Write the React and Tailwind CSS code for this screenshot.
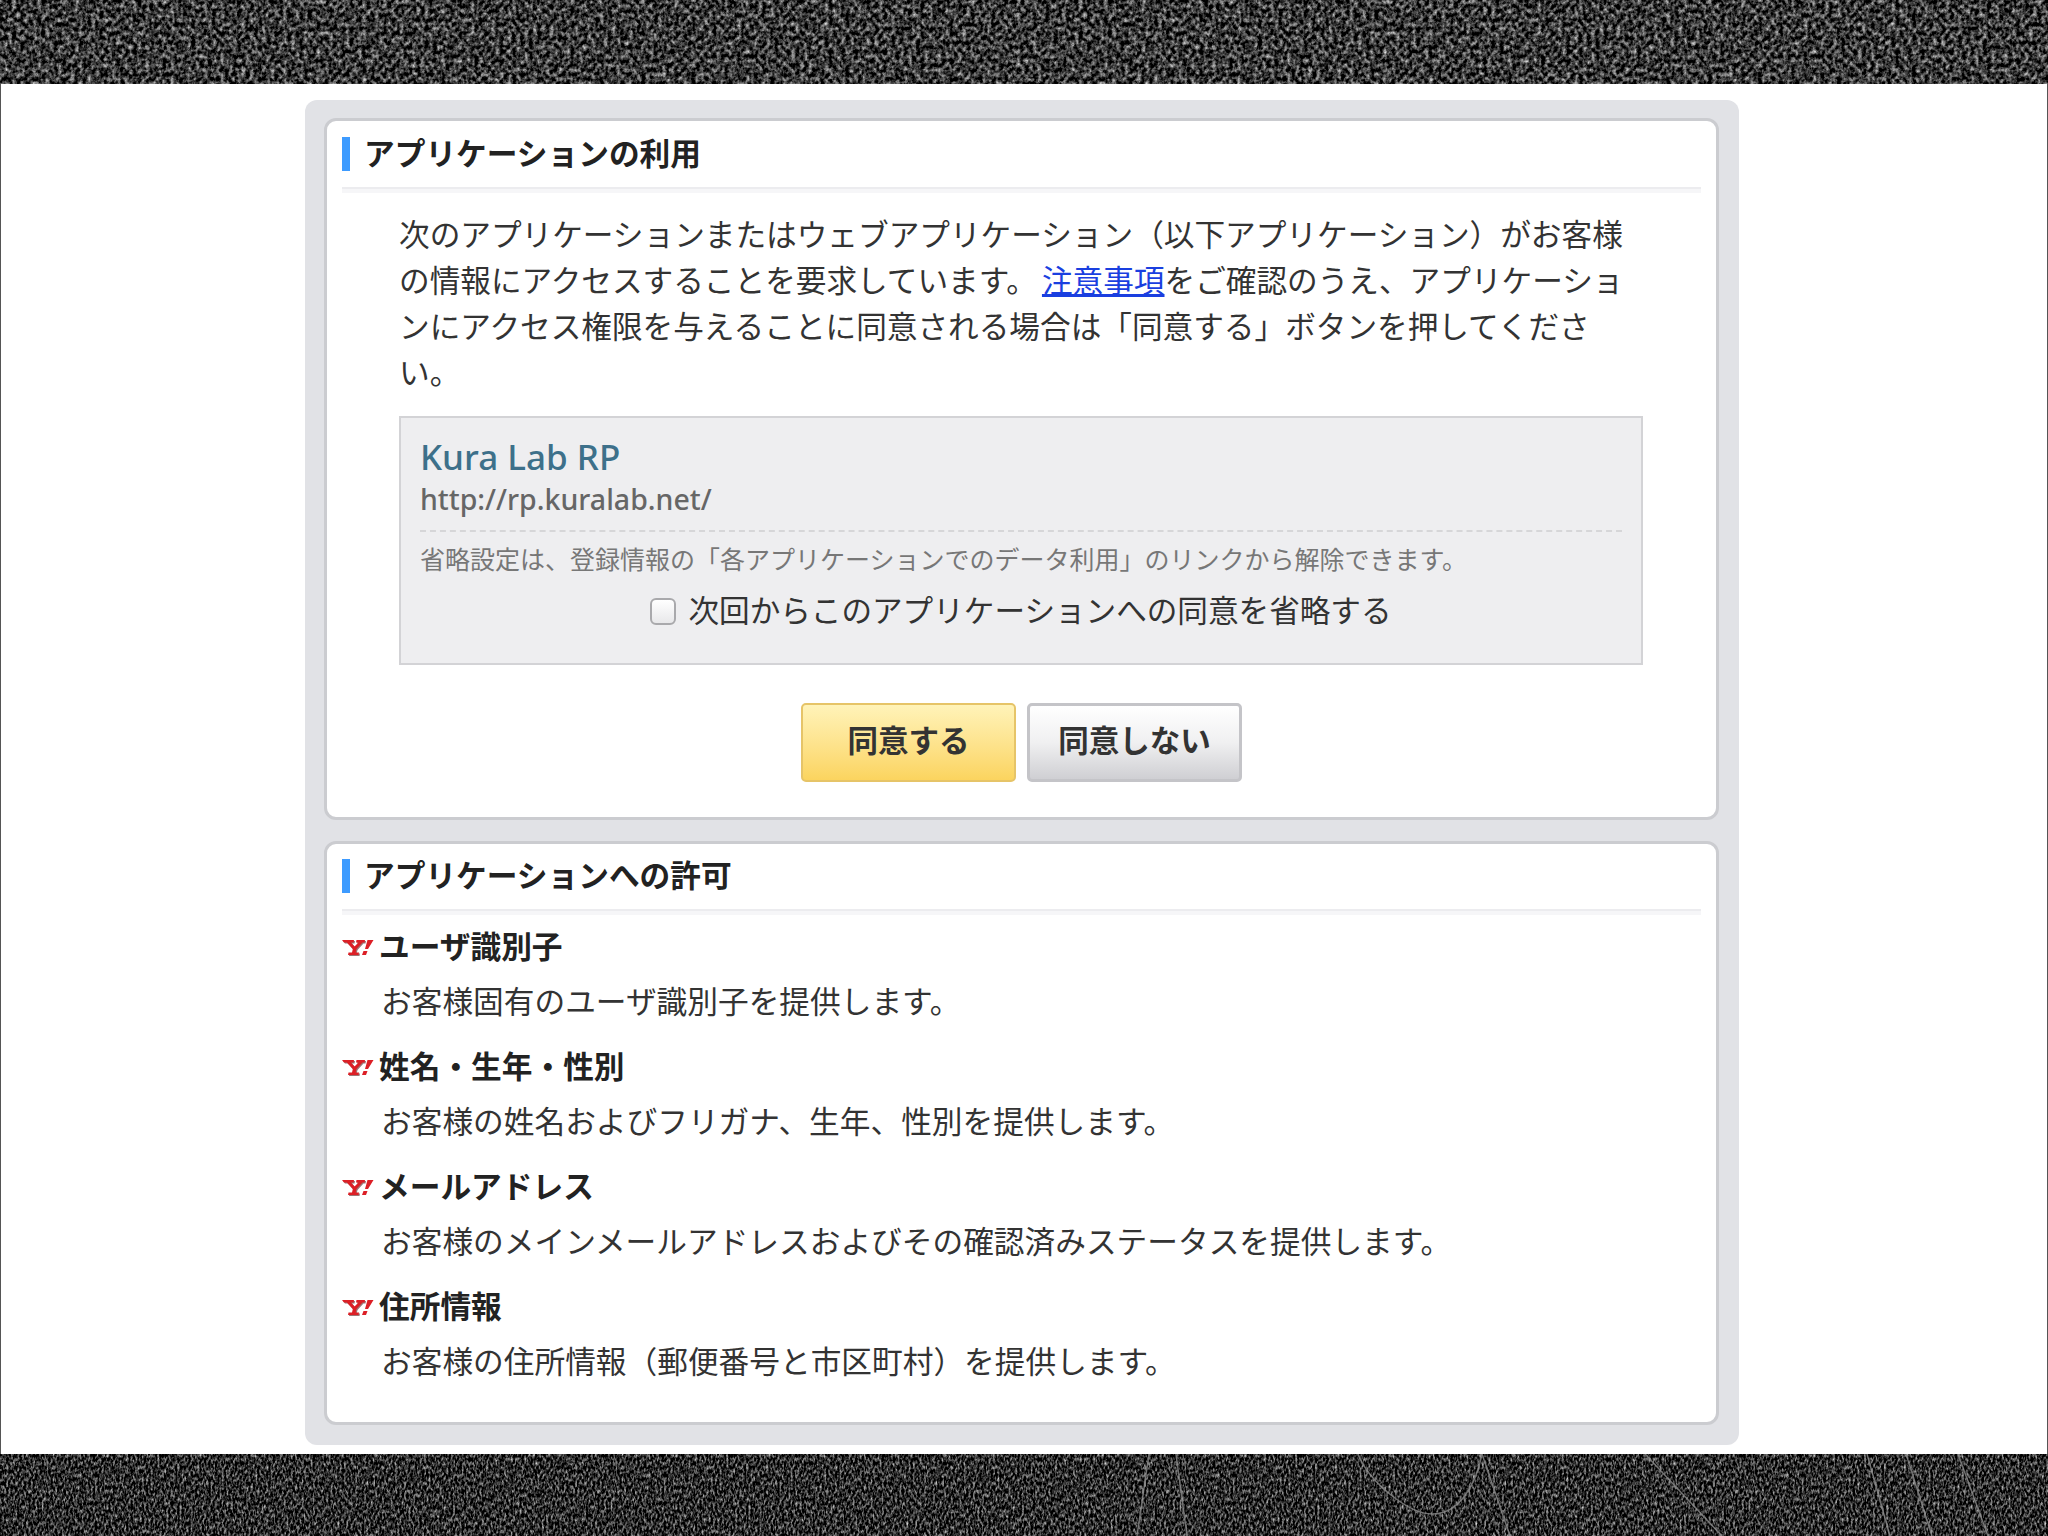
const jp = { fontFamily: '"Noto Sans CJK JP", sans-serif' };
const latin = { fontFamily: '"Noto Sans", sans-serif' };

const items = [
  ["ユーザ識別子", "お客様固有のユーザ識別子を提供します。"],
  ["姓名・生年・性別", "お客様の姓名およびフリガナ、生年、性別を提供します。"],
  ["メールアドレス", "お客様のメインメールアドレスおよびその確認済みステータスを提供します。"],
  ["住所情報", "お客様の住所情報（郵便番号と市区町村）を提供します。"],
];

function NoiseBand({ id, freq, matrix, className, children, seed }) {
  return (
    <svg className={className} width="2048" xmlns="http://www.w3.org/2000/svg">
      <filter id={id} x="0" y="0" width="100%" height="100%" colorInterpolationFilters="sRGB">
        <feTurbulence type="fractalNoise" baseFrequency={freq} numOctaves="3" seed={seed} />
        <feColorMatrix type="matrix" values={matrix} />
        <feGaussianBlur stdDeviation="0.7" />
      </filter>
      <rect width="2048" height="100%" filter={`url(#${id})`} />
      {children}
    </svg>
  );
}

function YahooMark() {
  const y = "M0 3h12l-.5 2.500H9l3.500 4 4-4H14l.5-2.500H23l-.5 2.500h-2l-6 6.500-.8 3.500H17l-.5 2.500H6l.5-2.500h3.500l.8-3.500-6-6.500H2z";
  return (
    <svg width="32" height="20" viewBox="0 0 32 20" className="shrink-0 mt-[4px]">
      <path fill="#5a1a1a" opacity="0.6" transform="translate(1 1)" d={y} />
      <path fill="#dc1f26" d={y} />
      <path fill="#dc1f26" d="M25.500 3h6l-5.500 9h-3zM21.500 14h4l-1.500 4h-4z" />
    </svg>
  );
}

function Heading({ children }) {
  return (
    <div>
      <div className="flex items-center h-[34px]">
        <div className="w-2 h-[34px] bg-[#3d9bff]" />
        <h2 className="ml-[14px] pb-[4px] text-[30.7px] font-bold text-[#222] leading-[34px]">{children}</h2>
      </div>
      <div className="mt-4 h-[6px] border-t-2 border-[#ececef] bg-[#f6f6f8]" />
    </div>
  );
}

export default function App() {
  return (
    <div className="w-[2048px] h-[1536px] flex flex-col overflow-hidden bg-white" style={jp}>
      <NoiseBand
        id="topNoise"
        freq="0.24 0.22"
        seed="4"
        matrix="1.5 0 0 0 -0.53  1.5 0 0 0 -0.53  1.5 0 0 0 -0.53  0 0 0 0 1"
        className="block h-[84px] shrink-0"
      />

      <main className="flex-1 border-x border-[#555] pt-4">
        <div className="ml-[304px] w-[1434px] h-[1345px] rounded-xl bg-[#e1e2e6] pt-[18px] pl-[19px] pr-[20px]">
          <section className="h-[702px] rounded-[12px] border-[3px] border-[#cbccd0] bg-white pt-4 px-[15px]">
            <Heading>アプリケーションの利用</Heading>

            <p className="mt-[17px] ml-[57px] w-[1242px] text-[30.65px] leading-[46px] text-[#333]">
              次のアプリケーションまたはウェブアプリケーション（以下アプリケーション）がお客様の情報にアクセスすることを要求しています。
              <a href="#" className="ml-[5px] text-[#1a3fe0] underline">注意事項</a>
              をご確認のうえ、アプリケーションにアクセス権限を与えることに同意される場合は「同意する」ボタンを押してください。
            </p>

            <div className="mt-[22px] ml-[57px] w-[1244px] h-[249px] border-2 border-[#d3d3d6] bg-[#eeeef0] px-[19px] pt-[16px]">
              <div className="text-[35px] leading-[46px] text-[#3d708a] font-medium" style={latin}>
                Kura Lab RP
              </div>
              <div className="text-[28.5px] leading-[38px] text-[#666] font-medium" style={latin}>
                http://rp.kuralab.net/
              </div>
              <div className="mt-[12px] border-t-2 border-dashed border-[#d6d6d8]" />
              <div className="mt-[8px] text-[25px] leading-[36px] text-[#777]">
                省略設定は、登録情報の「各アプリケーションでのデータ利用」のリンクから解除できます。
              </div>
              <label className="mt-[12px] flex items-center justify-center h-[44px] text-[30.6px] text-[#333]">
                <span className="mr-[12px] w-[26px] h-[27px] mt-[2px] rounded-[6px] border-2 border-[#a9a9ac] bg-gradient-to-b from-[#ffffff] to-[#e8e8ea]" />
                次回からこのアプリケーションへの同意を省略する
              </label>
            </div>

            <div className="mt-[38px] flex justify-center gap-[11px]">
              <button className="w-[215px] h-[79px] pb-[5px] rounded-[5px] border-2 border-[#e6c468] bg-gradient-to-b from-[#fff3b8] to-[#fbd45e] text-[30.5px] font-bold text-[#333]">
                同意する
              </button>
              <button className="w-[215px] h-[79px] pb-[5px] rounded-[5px] border-[3px] border-[#c4c4c8] bg-gradient-to-b from-[#ffffff] via-[#f0f0f1] to-[#cfcfd3] text-[30.5px] font-bold text-[#333]">
                同意しない
              </button>
            </div>
          </section>

          <section className="mt-[21px] h-[584px] rounded-[12px] border-[3px] border-[#cbccd0] bg-white pt-[15px] px-[15px]">
            <Heading>アプリケーションへの許可</Heading>
            <div className="mt-[7px]">
              {items.map(([title, desc]) => (
                <div key={title} className="mb-[19px]">
                  <div className="flex items-center h-[46px]">
                    <YahooMark />
                    <h3 className="ml-[5px] text-[30.7px] font-bold text-[#222]">{title}</h3>
                  </div>
                  <p className="mt-[9px] ml-[39px] text-[30.7px] leading-[46px] text-[#333]">{desc}</p>
                </div>
              ))}
            </div>
          </section>
        </div>
      </main>

      <NoiseBand
        id="bottomNoise"
        freq="0.45 0.25"
        seed="9"
        matrix="1.5 0 0 0 -0.58  1.5 0 0 0 -0.58  1.5 0 0 0 -0.58  0 0 0 0 1"
        className="block h-[82px] shrink-0"
      >
        <g fill="none" stroke="#8c8c8c" strokeWidth="1.500" opacity="0.8">
          <path d="M1149 0 L1137 82" />
          <path d="M1176 0 L1187 82" />
          <path d="M1358 0 C1370 30 1410 60 1432 60 C1460 60 1476 30 1482 0" />
          <path d="M1482 0 L1510 82" />
          <path d="M1645 0 L1722 82" />
          <path d="M1867 0 L1890 82" />
          <path d="M1906 0 L1932 82" />
          <path d="M1958 0 L1988 82" />
        </g>
      </NoiseBand>
    </div>
  );
}
